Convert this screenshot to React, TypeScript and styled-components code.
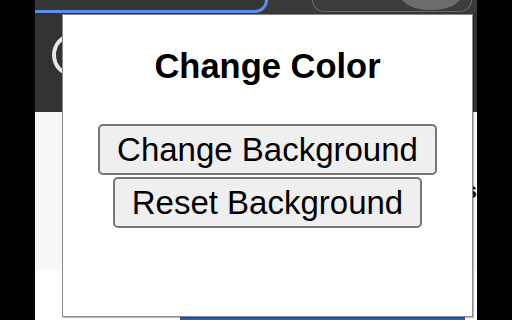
import React from "react";
import styled, { createGlobalStyle } from "styled-components";

const GlobalStyle = createGlobalStyle`
  html, body {
    margin: 0;
    padding: 0;
    background: #000;
  }
  body {
    font-family: "Liberation Sans", Arial, sans-serif;
  }
`;

const Screen = styled.div`
  display: flex;
  justify-content: center;
  width: 512px;
  height: 320px;
  overflow: hidden;
  background: #000;
`;

const Browser = styled.div`
  position: relative;
  display: flex;
  flex-direction: column;
  width: 442px;
  height: 320px;
  background: #3a3a3a;
`;

const TabStrip = styled.div`
  display: flex;
  height: 13px;
  background: #3a3a3a;
`;

const ActiveTab = styled.div`
  box-sizing: border-box;
  width: 233px;
  height: 13px;
  background: #363636;
  border-bottom: 3px solid #5b8ee8;
  border-right: 3px solid #5b8ee8;
  border-bottom-right-radius: 14px;
`;

const OtherTab = styled.div`
  position: relative;
  box-sizing: border-box;
  margin-left: 44px;
  width: 160px;
  height: 12px;
  border: 1px solid #6a6a6a;
  border-top: none;
  border-radius: 0 0 14px 14px;
  background: #3c3c3c;
  overflow: hidden;
`;

const TabBubble = styled.div`
  position: absolute;
  right: 10px;
  top: -18px;
  width: 60px;
  height: 28px;
  border-radius: 50%;
  background: #6c6c6c;
`;

const Toolbar = styled.div`
  display: flex;
  align-items: center;
  height: 99px;
  padding-left: 17px;
  background: #333;
`;

const Avatar = styled.div`
  width: 30px;
  height: 34px;
  border-radius: 50%;
  border: 4px solid #e8e8e8;
  margin-top: -16px;
`;

const Page = styled.div`
  flex: 1;
  display: flex;
  flex-direction: column;
  background: #fff;
`;

const PageBand = styled.div`
  display: flex;
  justify-content: flex-end;
  align-items: center;
  height: 158px;
  background: #f6f7f7;
  font-size: 22px;
  font-weight: bold;
  color: #111;
`;

const PageFill = styled.div`
  flex: 1;
  background: #fff;
`;

const BlueBar = styled.div`
  height: 4px;
  margin-left: 145px;
  width: 285px;
  background: #2d5db3;
`;

const Popup = styled.div`
  position: absolute;
  left: 27px;
  top: 14px;
  box-sizing: border-box;
  width: 411px;
  height: 303px;
  display: flex;
  flex-direction: column;
  align-items: center;
  padding-top: 31px;
  background: #fff;
  border: 1px solid #8a8a8a;
  box-shadow: 1px 1px 1px rgba(0, 0, 0, 0.25);
`;

const Title = styled.h3`
  margin: 0 0 38px;
  font-size: 34.5px;
  line-height: 40px;
  font-weight: bold;
  color: #000;
`;

const Buttons = styled.div`
  display: flex;
  flex-direction: column;
  align-items: center;
  gap: 2px;
`;

const Button = styled.button`
  box-sizing: border-box;
  height: 51px;
  padding: 0 17px;
  font-family: "Liberation Sans", Arial, sans-serif;
  font-size: 33px;
  line-height: 1;
  color: #000;
  background: #efefef;
  border: 2px solid #767676;
  border-radius: 5px;
  cursor: pointer;
`;

export default function App() {
  return (
    <>
      <GlobalStyle />
      <Screen>
        <Browser>
          <TabStrip>
            <ActiveTab />
            <OtherTab>
              <TabBubble />
            </OtherTab>
          </TabStrip>
          <Toolbar>
            <Avatar />
          </Toolbar>
          <Page>
            <PageBand>s</PageBand>
            <PageFill />
            <BlueBar />
          </Page>
          <Popup>
            <Title>Change Color</Title>
            <Buttons>
              <Button>Change Background</Button>
              <Button>Reset Background</Button>
            </Buttons>
          </Popup>
        </Browser>
      </Screen>
    </>
  );
}
